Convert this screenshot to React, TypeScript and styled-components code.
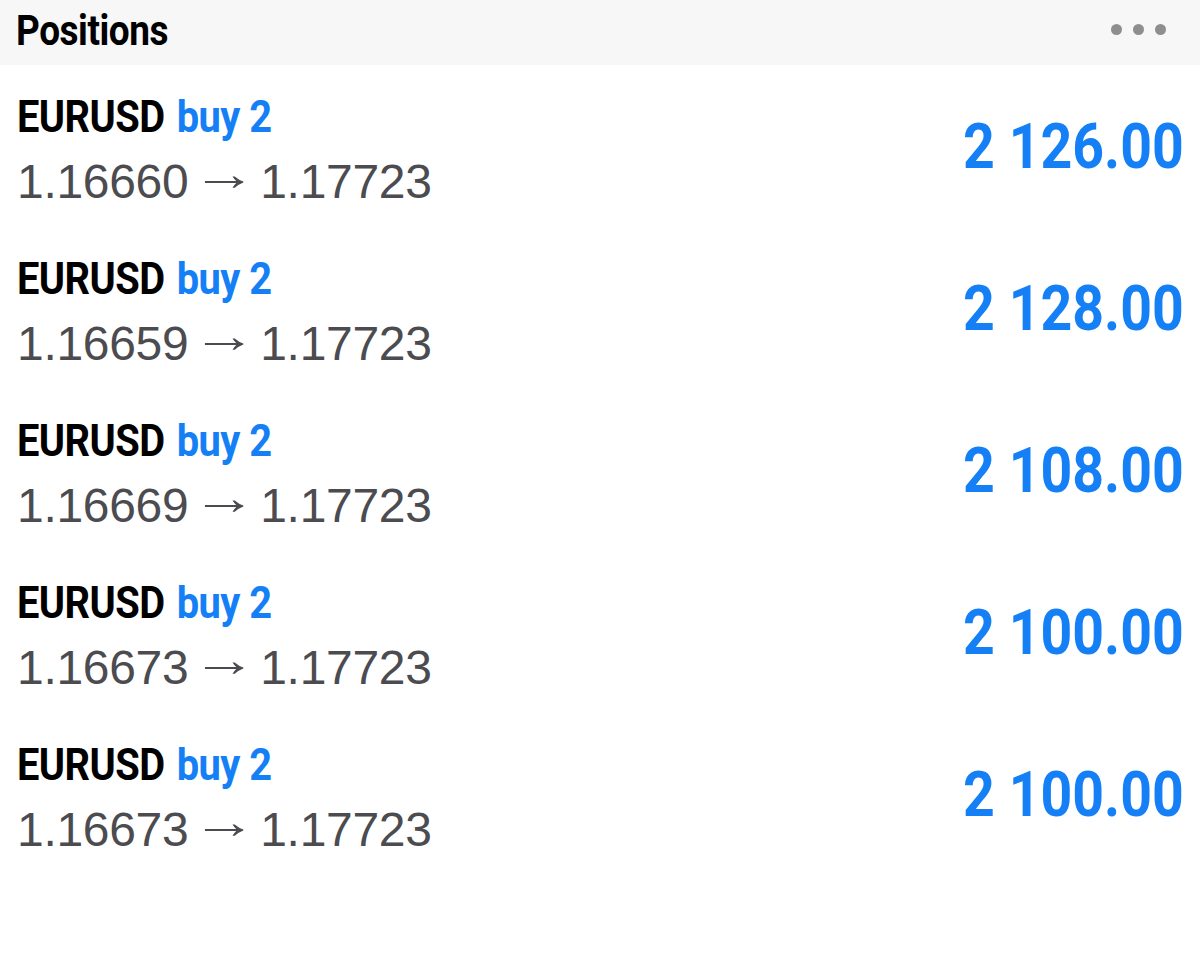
import styled, { createGlobalStyle } from 'styled-components';

const GlobalStyle = createGlobalStyle`
  html, body {
    margin: 0;
    padding: 0;
    background: #ffffff;
  }
`;

const Page = styled.div`
  width: 1200px;
  height: 963px;
  background: #ffffff;
  overflow: hidden;
`;

const Header = styled.div`
  display: flex;
  align-items: flex-start;
  justify-content: space-between;
  height: 65px;
  box-sizing: border-box;
  padding: 10px 34px 0 16px;
  background: #f7f7f7;
`;

const Title = styled.h1`
  margin: 0;
  font-family: 'Roboto', 'Liberation Sans', sans-serif;
  font-weight: 700;
  font-size: 42px;
  line-height: 42px;
  color: #000000;
  letter-spacing: -0.5px;
  transform: scaleX(0.88);
  transform-origin: left center;
`;

const MoreButton = styled.div`
  display: flex;
  gap: 11px;
  margin-top: 14px;
`;

const Dot = styled.span`
  width: 11px;
  height: 11px;
  border-radius: 50%;
  background: #8e8e8e;
`;

const List = styled.div`
  display: flex;
  flex-direction: column;
`;

const Row = styled.div`
  display: flex;
  align-items: center;
  justify-content: space-between;
  height: 162px;
  box-sizing: border-box;
  padding: 0 16px 0 17px;
`;

const Info = styled.div`
  display: flex;
  flex-direction: column;
  gap: 15px;
  margin-top: 9px;
`;

const NameLine = styled.div`
  font-family: 'Roboto', 'Liberation Sans', sans-serif;
  font-weight: 700;
  font-size: 45px;
  line-height: 48px;
  letter-spacing: -0.6px;
  transform: scaleX(0.885);
  transform-origin: left center;
  white-space: nowrap;
`;

const Symbol = styled.span`
  color: #000000;
  margin-right: 3px;
`;

const Side = styled.span`
  color: #1580f6;
`;

const PriceLine = styled.div`
  font-family: 'Liberation Sans', Arial, sans-serif;
  font-size: 48px;
  line-height: 52px;
  letter-spacing: -0.3px;
  color: #4b4b50;
  white-space: nowrap;
`;

const Arrow = styled.span`
  display: inline-block;
  margin: 0 -1px;
  transform: translateY(-8px) scaleX(1.35);
`;

const Profit = styled.div`
  font-family: 'Roboto', 'Liberation Sans', sans-serif;
  font-weight: 700;
  font-size: 63px;
  line-height: 63px;
  color: #1580f6;
  white-space: nowrap;
  transform: scaleX(0.88);
  transform-origin: right center;
`;

type Position = {
  symbol: string;
  side: string;
  volume: number;
  open: string;
  current: string;
  profit: string;
};

const positions: Position[] = [
  { symbol: 'EURUSD', side: 'buy', volume: 2, open: '1.16660', current: '1.17723', profit: '2 126.00' },
  { symbol: 'EURUSD', side: 'buy', volume: 2, open: '1.16659', current: '1.17723', profit: '2 128.00' },
  { symbol: 'EURUSD', side: 'buy', volume: 2, open: '1.16669', current: '1.17723', profit: '2 108.00' },
  { symbol: 'EURUSD', side: 'buy', volume: 2, open: '1.16673', current: '1.17723', profit: '2 100.00' },
  { symbol: 'EURUSD', side: 'buy', volume: 2, open: '1.16673', current: '1.17723', profit: '2 100.00' },
];

const App = () => {
  return (
    <>
      <GlobalStyle />
      <Page>
        <Header>
          <Title>Positions</Title>
          <MoreButton>
            <Dot />
            <Dot />
            <Dot />
          </MoreButton>
        </Header>
        <List>
          {positions.map((p, i) => (
            <Row key={i}>
              <Info>
                <NameLine>
                  <Symbol>{p.symbol}</Symbol> <Side>{p.side} {p.volume}</Side>
                </NameLine>
                <PriceLine>
                  {p.open} <Arrow>→</Arrow> {p.current}
                </PriceLine>
              </Info>
              <Profit>{p.profit}</Profit>
            </Row>
          ))}
        </List>
      </Page>
    </>
  );
};

export default App;
